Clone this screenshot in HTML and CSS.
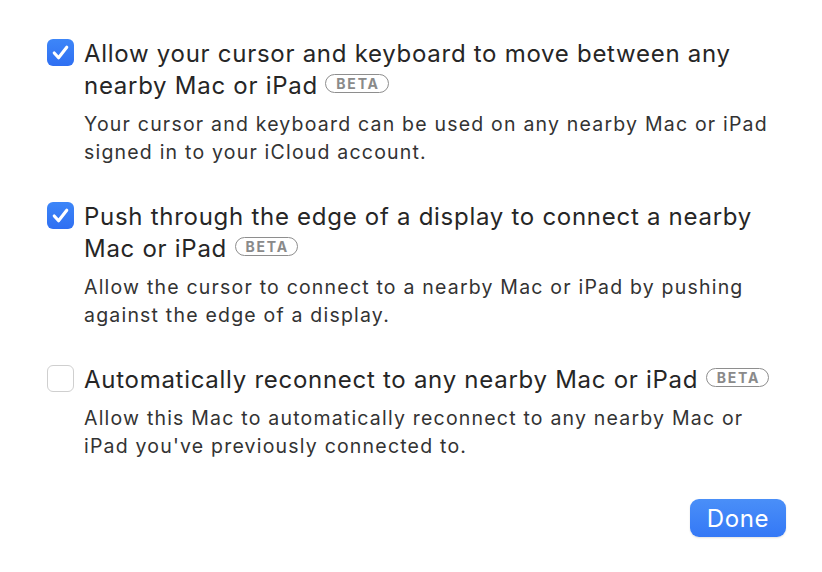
FILE: index.html
```html
<!DOCTYPE html>
<html>
<head>
<meta charset="utf-8">
<link rel="stylesheet" href="styles.css">
</head>
<body>
<div class="sheet">
  <div class="options">
    <div class="option">
      <span class="check on"><svg viewBox="0 0 28 28" width="27" height="27"><path d="M7.5 14.5 L12 19.5 L20.5 8.5" fill="none" stroke="#fff" stroke-width="3.2" stroke-linecap="round" stroke-linejoin="round"/></svg></span>
      <div class="text">
        <div class="title">Allow your cursor and keyboard to move between any nearby Mac or iPad <span class="beta">BETA</span></div>
        <div class="desc">Your cursor and keyboard can be used on any nearby Mac or iPad signed in to your iCloud account.</div>
      </div>
    </div>
    <div class="option">
      <span class="check on"><svg viewBox="0 0 28 28" width="27" height="27"><path d="M7.5 14.5 L12 19.5 L20.5 8.5" fill="none" stroke="#fff" stroke-width="3.2" stroke-linecap="round" stroke-linejoin="round"/></svg></span>
      <div class="text">
        <div class="title">Push through the edge of a display to connect a nearby Mac or iPad <span class="beta">BETA</span></div>
        <div class="desc">Allow the cursor to connect to a nearby Mac or iPad by pushing against the edge of a display.</div>
      </div>
    </div>
    <div class="option">
      <span class="check"></span>
      <div class="text">
        <div class="title">Automatically reconnect to any nearby Mac or iPad <span class="beta">BETA</span></div>
        <div class="desc">Allow this Mac to automatically reconnect to any nearby Mac or iPad you've previously connected to.</div>
      </div>
    </div>
  </div>
  <div class="actions">
    <button class="done">Done</button>
  </div>
</div>
</body>
</html>
```

FILE: styles.css
```css
html, body {
  margin: 0;
  padding: 0;
  background: #ffffff;
}
body {
  font-family: Inter, "Noto Sans", "Liberation Sans", sans-serif;
  width: 822px;
  height: 572px;
  overflow: hidden;
}
.sheet {
  box-sizing: border-box;
  width: 822px;
  height: 572px;
  padding: 38px 36px 0 47px;
  display: flex;
  flex-direction: column;
}
.options {
  display: flex;
  flex-direction: column;
  gap: 35px;
}
.option {
  display: flex;
  gap: 10px;
  align-items: flex-start;
}
.check {
  flex: none;
  width: 27px;
  height: 27px;
  margin-top: 1px;
  box-sizing: border-box;
  border-radius: 6px;
  border: 1px solid #cfcfcf;
  background: #fff;
  display: flex;
  align-items: center;
  justify-content: center;
}
.check.on {
  border: none;
  background: linear-gradient(#3d86f8, #2f6ff2);
}
.check svg { display: block; }
.text {
  flex: 1;
}
.title {
  font-size: 24px;
  line-height: 32px;
  color: #262626;
  letter-spacing: 0.72px;
}
.beta {
  display: inline-block;
  vertical-align: 5px;
  font-size: 14px;
  line-height: 17px;
  font-weight: 700;
  letter-spacing: 1.8px;
  color: #8a8a8a;
  border: 1.5px solid #8e8e8e;
  border-radius: 11px;
  padding: 0 8px 0 10px;
  margin-left: 0;
}
.desc {
  margin-top: 8px;
  font-size: 19.5px;
  line-height: 28px;
  color: #333333;
  letter-spacing: 1.2px;
}
.actions {
  margin-top: auto;
  margin-bottom: 35px;
  display: flex;
  justify-content: flex-end;
}
.done {
  font-family: inherit;
  font-size: 24px;
  letter-spacing: 0.6px;
  color: #fff;
  border: none;
  border-radius: 9px;
  width: 96px;
  height: 38px;
  background: linear-gradient(#4a8ff8, #3478f6);
  box-shadow: 0 1px 2px rgba(0,0,0,0.12);
  padding: 0;
}
```
